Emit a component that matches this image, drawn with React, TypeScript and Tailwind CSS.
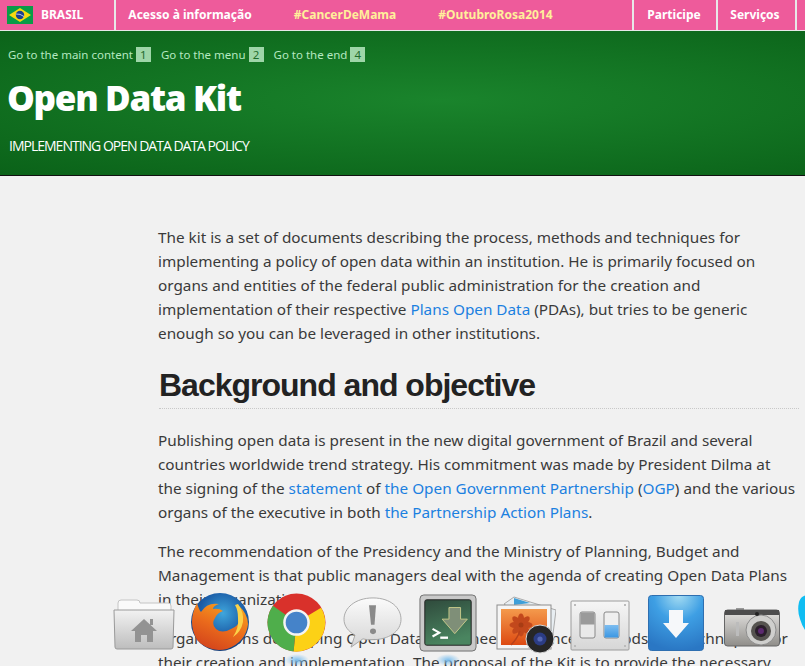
const navItems = [
  { label: "Acesso à informação", className: "w-[150px] text-white", bordered: true },
  { label: "#CancerDeMama", className: "w-[162px] text-[#fff09a]", bordered: false },
  { label: "#OutubroRosa2014", className: "w-[206px] pr-[67px] text-[#fff09a]", bordered: false },
  { label: "Participe", className: "w-[84px] pr-[2px] text-white", bordered: true },
  { label: "Serviços", className: "w-[79px] pr-[3px] text-white", bordered: true },
];

const petals = [0, 45, 90, 135, 180, 225, 270, 315];

function BrazilFlag() {
  return (
    <svg width="26" height="18" viewBox="0 0 26 18">
      <rect width="26" height="18" fill="#0a9b48" />
      <path d="M13 2 L24 9 L13 16 L2 9 Z" fill="#f6d90f" />
      <circle cx="13" cy="9" r="4.2" fill="#1c3f8f" />
      <path d="M9 8 Q13 7.5 17 10.5" stroke="#fff" strokeWidth="0.7" fill="none" />
    </svg>
  );
}

function FolderIcon() {
  return (
    <svg width="62" height="52" viewBox="0 0 62 52">
      <defs>
        <linearGradient id="folderBody" x1="0" y1="0" x2="0" y2="1">
          <stop offset="0" stopColor="#f2f2f2" />
          <stop offset="1" stopColor="#bdbdbd" />
        </linearGradient>
      </defs>
      <path d="M5 4 Q5 1 8 1 H24 Q27 1 27 4 H55 Q58 4 58 7 V12 H5 Z" fill="#fafafa" stroke="#c4c4c4" />
      <path d="M1 11 H61 L60 48 Q60 50 58 50 H4 Q2 50 2 48 Z" fill="url(#folderBody)" stroke="#9a9a9a" />
      <path d="M31 20 L44 32 H40 V43 H34 V36 H28 V43 H22 V32 H18 Z" fill="#939393" />
      <rect x="37" y="20" width="3" height="6" fill="#939393" />
    </svg>
  );
}

function FirefoxIcon() {
  return (
    <svg width="60" height="60" viewBox="1 0 60 60">
      <defs>
        <radialGradient id="ffGlobe" cx="0.55" cy="0.35" r="0.7">
          <stop offset="0" stopColor="#3fa6dc" />
          <stop offset="0.55" stopColor="#1c5ea8" />
          <stop offset="1" stopColor="#12366f" />
        </radialGradient>
        <linearGradient id="ffFox" x1="0.7" y1="0" x2="0.2" y2="1">
          <stop offset="0" stopColor="#f7a21f" />
          <stop offset="0.5" stopColor="#ea6a1c" />
          <stop offset="1" stopColor="#d1401b" />
        </linearGradient>
      </defs>
      <circle cx="31" cy="30" r="29" fill="url(#ffGlobe)" />
      <path d="M8 11 Q10 18 12 20 Q18 10 30 12 Q24 14 24 17 Q30 16 34 19 Q28 21 26 26 Q22 32 27 37 Q33 42 42 37 Q50 34 52 26 Q53 19 49 13 Q59 22 59 32 Q57 50 38 57 Q20 61 8 48 Q-2 30 8 11 Z" fill="url(#ffFox)" />
      <path d="M49 12 Q55 20 54 30 Q52 40 44 45 Q50 36 49 26 Q49 18 46 13 Z" fill="#fbd24a" />
    </svg>
  );
}

function ChromeIcon() {
  return (
    <svg width="59" height="59" viewBox="0 0 60 60">
      <circle cx="30" cy="30" r="29.5" fill="#d9312b" />
      <path d="M30 30 L55 15 A29.5 29.5 0 0 1 27 59.5 Z" fill="#fcd116" />
      <path d="M30 30 L27 59.5 A29.5 29.5 0 0 1 6 13 Z" fill="#4fae4b" />
      <circle cx="30" cy="30" r="13.5" fill="#f4f4f4" />
      <circle cx="30" cy="30" r="11" fill="#4583c9" />
    </svg>
  );
}

function NoticeIcon() {
  return (
    <svg width="60" height="52" viewBox="0 0 60 56" preserveAspectRatio="none">
      <defs>
        <linearGradient id="noticeBody" x1="0" y1="0" x2="0" y2="1">
          <stop offset="0" stopColor="#fbfbfb" />
          <stop offset="1" stopColor="#d5d5d5" />
        </linearGradient>
      </defs>
      <path d="M30 1 C48 1 58 12 58 24 C58 37 46 46 29 46 C26 46 23 46 20 45 L8 54 L12 41 C5 37 1 31 1 24 C1 12 12 1 30 1 Z" fill="url(#noticeBody)" stroke="#a8a8a8" />
      <path d="M26 9 H33 L31.5 30 H28 Z" fill="#8a8a8a" />
      <circle cx="30" cy="37" r="3" fill="#8a8a8a" />
    </svg>
  );
}

function TerminalIcon() {
  return (
    <svg width="58" height="58" viewBox="0 0 60 60">
      <defs>
        <linearGradient id="termScreen" x1="0" y1="0" x2="0.3" y2="1">
          <stop offset="0" stopColor="#2f4a3c" />
          <stop offset="1" stopColor="#4a8560" />
        </linearGradient>
      </defs>
      <rect x="1" y="1" width="58" height="58" rx="4" fill="#c9c9c9" stroke="#6f6f6f" />
      <rect x="6" y="6" width="48" height="47" rx="2" fill="url(#termScreen)" stroke="#222" />
      <path d="M31 14 H43 V26 H50 L37 41 L24 26 H31 Z" fill="#7f8f78" stroke="#c5c98a" />
      <path d="M14 36 L21 40 L14 44" stroke="#fff" strokeWidth="2.2" fill="none" />
      <rect x="22" y="44" width="8" height="2.4" fill="#fff" />
    </svg>
  );
}

function PhotosIcon() {
  return (
    <svg width="60" height="58" viewBox="0 0 60 58">
      <defs>
        <linearGradient id="photoBg" x1="0" y1="0" x2="0" y2="1">
          <stop offset="0" stopColor="#f49a4c" />
          <stop offset="1" stopColor="#dd4a12" />
        </linearGradient>
      </defs>
      <path d="M8 8 L18 1 L60 14 L56 46 Z" fill="#e8eef2" stroke="#aaa" />
      <path d="M18 2 L34 7 L18 9 Z" fill="#3f9fd8" />
      <rect x="1" y="9" width="54" height="44" fill="#f5f5f5" stroke="#8d8d8d" />
      <rect x="5" y="13" width="46" height="36" fill="url(#photoBg)" />
      {petals.map((angle) => (
        <ellipse key={angle} cx="25" cy="22.5" rx="3" ry="5" fill="#c2481c" transform={`rotate(${angle} 25 29)`} />
      ))}
      <circle cx="25" cy="29" r="2.5" fill="#a83c14" />
      <path d="M24 35 Q21 43 15 49" stroke="#b9421a" strokeWidth="1.5" fill="none" />
      <circle cx="44" cy="43" r="14" fill="#262626" stroke="#d8d8d8" />
      <circle cx="44" cy="43" r="6.5" fill="#2b3c84" />
      <circle cx="44" cy="43" r="2.6" fill="#5567b5" />
    </svg>
  );
}

function SwitchesIcon() {
  return (
    <svg width="60" height="52" viewBox="0 0 60 52">
      <defs>
        <linearGradient id="switchPlate" x1="0" y1="0" x2="0" y2="1">
          <stop offset="0" stopColor="#f6f6f6" />
          <stop offset="1" stopColor="#d6d6d6" />
        </linearGradient>
        <linearGradient id="switchBlue" x1="0" y1="0" x2="0" y2="1">
          <stop offset="0" stopColor="#7dbdf0" />
          <stop offset="1" stopColor="#3b97e3" />
        </linearGradient>
      </defs>
      <rect x="1" y="1" width="58" height="49" rx="1" fill="url(#switchPlate)" stroke="#9c9c9c" />
      <rect x="4" y="4" width="2" height="2" fill="#bbb" />
      <rect x="54" y="4" width="2" height="2" fill="#bbb" />
      <rect x="4" y="45" width="2" height="2" fill="#bbb" />
      <rect x="54" y="45" width="2" height="2" fill="#bbb" />
      <rect x="10" y="12" width="15" height="26" rx="2" fill="#e9e9e9" stroke="#888" />
      <rect x="10.5" y="12.5" width="14" height="12" fill="#9a9a9a" />
      <rect x="34" y="12" width="15" height="26" rx="2" fill="#efefef" stroke="#888" />
      <rect x="34.5" y="25" width="14" height="12.5" fill="url(#switchBlue)" />
    </svg>
  );
}

function DownloadIcon() {
  return (
    <svg width="56" height="56" viewBox="0 0 56 56">
      <defs>
        <radialGradient id="dlBg" cx="0.55" cy="0" r="1">
          <stop offset="0" stopColor="#a4dcf2" />
          <stop offset="0.45" stopColor="#3e9fe4" />
          <stop offset="1" stopColor="#2a77c4" />
        </radialGradient>
      </defs>
      <rect x="0.5" y="0.5" width="55" height="55" rx="3" fill="url(#dlBg)" stroke="#2f6fb0" />
      <path d="M21 15 H35 V28 H41 L28 43 L15 28 H21 Z" fill="#f6f8fa" />
    </svg>
  );
}

function CameraIcon() {
  return (
    <svg width="56" height="40" viewBox="0 0 56 40">
      <defs>
        <linearGradient id="camBody" x1="0" y1="0" x2="0" y2="1">
          <stop offset="0" stopColor="#e5e4e2" />
          <stop offset="1" stopColor="#8f8d89" />
        </linearGradient>
      </defs>
      <rect x="12" y="0" width="8" height="3" fill="#999" />
      <rect x="0.5" y="2" width="55" height="36" rx="3" fill="url(#camBody)" stroke="#666" />
      <rect x="1" y="2" width="54" height="5" fill="#4d4d4d" />
      <rect x="12" y="14" width="3" height="14" fill="#bcbcbc" />
      <circle cx="37" cy="22" r="15" fill="#cfcfcd" stroke="#8d8d8d" />
      <circle cx="37" cy="23" r="10" fill="#55534f" />
      <circle cx="37" cy="23" r="6" fill="#2a1f2b" />
      <circle cx="37" cy="23" r="3" fill="#5c2a70" />
      <circle cx="33" cy="6" r="2" fill="#222" />
    </svg>
  );
}

function SkypeIcon() {
  return (
    <svg width="30" height="44" viewBox="0 0 30 44">
      <path d="M10 0 Q3 0 1 7 Q-1 16 2 24 Q6 38 17 44 L30 44 V0 Z" fill="#10bdf2" />
    </svg>
  );
}

export default function App() {
  return (
    <div className="relative h-[666px] w-[805px] overflow-hidden bg-[#f1f1f1] font-['Noto_Sans',sans-serif] text-[15.3px] leading-[24px] text-[#3a3a3a]">
      <nav className="flex h-[31px] border-b border-[#e8e8e8] bg-[#ee5b9b] text-[12px] font-bold">
        <div className="flex w-[114px] items-center gap-[8px] pl-[7px] text-white">
          <BrazilFlag />
          <span>BRASIL</span>
        </div>
        {navItems.map((item) => (
          <div
            key={item.label}
            className={`flex items-center justify-center ${item.className} ${item.bordered ? "border-l-2 border-[#e8e8e8]" : ""}`}
          >
            {item.label}
          </div>
        ))}
        <div className="flex-1 border-l-2 border-[#e8e8e8]" />
      </nav>

      <header className="h-[145px] border-b border-[#111] bg-[radial-gradient(ellipse_85%_72%_at_55%_48%,#1a842c,#0a6118)] pl-[8px] pt-[16px]">
        <div className="flex text-[11.5px] leading-[15px] text-[#b5e8c0]">
          <span>Go to the main content</span>
          <span className="ml-[3px] w-[15px] bg-[#9ed6a8] text-center text-[#1f6b2c]">1</span>
          <span className="ml-[10px]">Go to the menu</span>
          <span className="ml-[3px] w-[15px] bg-[#9ed6a8] text-center text-[#1f6b2c]">2</span>
          <span className="ml-[10px]">Go to the end</span>
          <span className="ml-[3px] w-[15px] bg-[#9ed6a8] text-center text-[#1f6b2c]">4</span>
        </div>
        <h1 className="mt-[11px] -ml-[1px] font-['Open_Sans',sans-serif] text-[35px] leading-[50px] font-extrabold tracking-[-1.3px] text-white">
          Open Data Kit
        </h1>
        <p className="mt-[13px] ml-[1px] font-['Open_Sans',sans-serif] text-[14px] leading-[20px] tracking-[-1px] text-white">
          IMPLEMENTING OPEN DATA DATA POLICY
        </p>
      </header>

      <main className="ml-[158px] w-[638px] pt-[49px]">
        <p className="mb-[20px]">
          The kit is a set of documents describing the process, methods and techniques for implementing a policy of open
          data within an institution. He is primarily focused on organs and entities of the federal public administration
          for the creation and implementation of their respective <a className="text-[#1b80e0]">Plans Open Data</a> (PDAs),
          but tries to be generic enough so you can be leveraged in other institutions.
        </p>
        <h2 className="mb-[19px] ml-[1px] -mr-[3px] border-b border-dotted border-[#c8c8c8] pb-[3px] font-['Liberation_Sans',sans-serif] text-[32px] leading-[40px] font-bold tracking-[-1px] text-[#222]">
          Background and objective
        </h2>
        <p className="mb-[15px]">
          Publishing open data is present in the new digital government of Brazil and several countries worldwide trend
          strategy. His commitment was made by President Dilma at the signing of the{" "}
          <a className="text-[#1b80e0]">statement</a> of <a className="text-[#1b80e0]">the Open Government Partnership</a> (
          <a className="text-[#1b80e0]">OGP</a>) and the various organs of the executive in both{" "}
          <a className="text-[#1b80e0]">the Partnership Action Plans</a>.
        </p>
        <p className="mb-[15px]">
          The recommendation of the Presidency and the Ministry of Planning, Budget and Management is that public managers
          deal with the agenda of creating Open Data Plans in their organization.
        </p>
        <p>
          Organizations developing Open Data Plans need guidance, methods and techniques for their creation and
          implementation. The proposal of the Kit is to provide the necessary
        </p>
      </main>

      <div className="absolute bottom-0 left-[285px] h-[12px] w-[24px] rounded-full bg-[radial-gradient(closest-side,#7fc0ee,transparent)]" />
      <div className="absolute bottom-0 left-[436px] h-[12px] w-[24px] rounded-full bg-[radial-gradient(closest-side,#7fc0ee,transparent)]" />
      <div className="absolute bottom-[4px] left-[113px] flex h-[76px] w-[692px] items-center">
        <div className="mt-[2px]"><FolderIcon /></div>
        <div className="mb-[4px] ml-[15px]"><FirefoxIcon /></div>
        <div className="mb-[4px] ml-[17px]"><ChromeIcon /></div>
        <div className="mb-[3px] ml-[17px]"><NoticeIcon /></div>
        <div className="mb-[2px] ml-[16px]"><TerminalIcon /></div>
        <div className="mt-[1px] ml-[19px]"><PhotosIcon /></div>
        <div className="mt-[4px] ml-[14px]"><SwitchesIcon /></div>
        <div className="mb-[2px] ml-[18px]"><DownloadIcon /></div>
        <div className="mt-[8px] ml-[20px]"><CameraIcon /></div>
        <div className="mb-[14px] ml-[18px]"><SkypeIcon /></div>
      </div>
    </div>
  );
}
